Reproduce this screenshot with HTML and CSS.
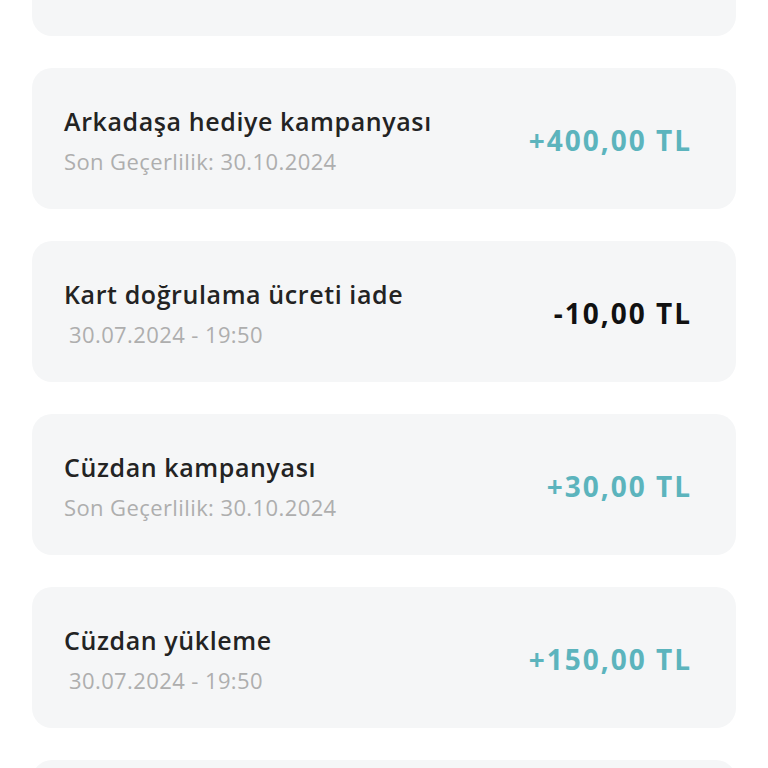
FILE: index.html
```html
<!DOCTYPE html>
<html lang="tr">
<head>
<meta charset="utf-8">
<link rel="stylesheet" href="styles.css">
</head>
<body>
<div class="list">
  <div class="card card-top"></div>
  <div class="card">
    <div class="info">
      <div class="title">Arkadaşa hediye kampanyası</div>
      <div class="sub">Son Geçerlilik: 30.10.2024</div>
    </div>
    <div class="amount plus">+400,00 TL</div>
  </div>
  <div class="card">
    <div class="info">
      <div class="title">Kart doğrulama ücreti iade</div>
      <div class="sub date">30.07.2024 - 19:50</div>
    </div>
    <div class="amount minus">-10,00 TL</div>
  </div>
  <div class="card">
    <div class="info">
      <div class="title">Cüzdan kampanyası</div>
      <div class="sub">Son Geçerlilik: 30.10.2024</div>
    </div>
    <div class="amount plus">+30,00 TL</div>
  </div>
  <div class="card">
    <div class="info">
      <div class="title">Cüzdan yükleme</div>
      <div class="sub date">30.07.2024 - 19:50</div>
    </div>
    <div class="amount plus">+150,00 TL</div>
  </div>
  <div class="card card-next"></div>
</div>
</body>
</html>
```

FILE: styles.css
```css
html, body {
  margin: 0;
  padding: 0;
  background: #ffffff;
  overflow: hidden;
}
body {
  font-family: "Open Sans", "Noto Sans", sans-serif;
  height: 768px;
}
.list {
  display: flex;
  flex-direction: column;
  gap: 32px;
  padding: 0 32px;
  margin-top: -105px;
}
.card {
  height: 141px;
  box-sizing: border-box;
  background: #f5f6f7;
  border-radius: 20px;
  display: flex;
  align-items: center;
  justify-content: space-between;
  padding: 4px 46px 0 32px;
  flex-shrink: 0;
}
.info {
  display: flex;
  flex-direction: column;
  gap: 11px;
}
.title {
  font-size: 25px;
  font-weight: 600;
  color: #232323;
  line-height: 30px;
  letter-spacing: 0.6px;
}
.sub {
  font-size: 22px;
  color: #aeaeae;
  line-height: 28px;
  letter-spacing: 0.4px;
}
.sub.date {
  padding-left: 5px;
}
.amount {
  font-size: 28px;
  font-weight: 700;
  line-height: 34px;
  margin-top: -2px;
  letter-spacing: 2px;
  margin-right: -2px;
}
.amount.plus {
  color: #5cb4bd;
}
.amount.minus {
  color: #111111;
}
```
